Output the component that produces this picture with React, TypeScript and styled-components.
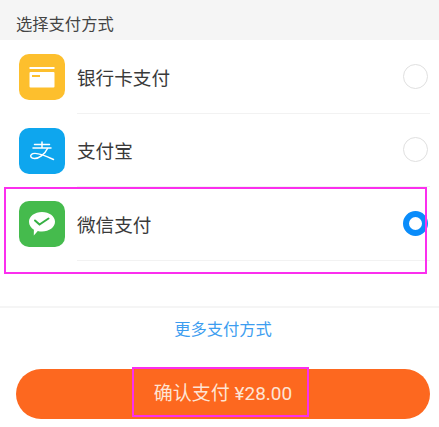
import React, { useState } from 'react';
import styled, { createGlobalStyle } from 'styled-components';

const GlobalStyle = createGlobalStyle`
  html, body {
    margin: 0;
    padding: 0;
    background: #fff;
    font-family: "Roboto", "Noto Sans CJK SC", sans-serif;
  }
`;

type Method = { id: string; label: string; icon: React.ReactNode; color: string };

const CardIcon = () => (
  <svg width="26" height="21" viewBox="0 0 26 21">
    <rect x="0.500" y="0" width="25" height="2" fill="#fff" />
    <rect x="0.500" y="5" width="25" height="15.500" rx="1" fill="#fff" />
    <rect x="3" y="8" width="8" height="2" fill="#fdbf2d" />
  </svg>
);

const AlipayIcon = () => (
  <svg width="26" height="20" viewBox="0 0 26 20" fill="none" stroke="#fff" strokeWidth="1.500" strokeLinecap="round">
    <path d="M13 1v5.500M5.500 3.500h15M4 7h18" />
    <path d="M18.500 7.500C16 13 10 17.500 5.500 17.500 2 17.500 0.800 15 2.400 13.500 5 11 13 13 24.500 18.500" />
  </svg>
);

const WechatIcon = () => (
  <svg width="28" height="26" viewBox="0 0 28 26">
    <path
      d="M14 1C21.200 1 27 5.400 27 10.800S21.200 20.600 14 20.600c-1.500 0-2.900-.2-4.200-.6L5.800 24.500l.1-5.800C3 17 1 14.100 1 10.800 1 5.400 6.800 1 14 1z"
      fill="#fff"
    />
    <path d="M7 9.500l4.500 4L20.500 7.500" fill="none" stroke="#35b043" strokeWidth="2" strokeLinecap="round" />
  </svg>
);

const methods: Method[] = [
  { id: 'card', label: '银行卡支付', icon: <CardIcon />, color: '#fdbf2d' },
  { id: 'alipay', label: '支付宝', icon: <AlipayIcon />, color: '#0ea6ee' },
  { id: 'wechat', label: '微信支付', icon: <WechatIcon />, color: '#45bb4d' },
];

export default function App() {
  const [selected, setSelected] = useState('wechat');

  return (
    <Page>
      <GlobalStyle />
      <Header>选择支付方式</Header>
      <List>
        {methods.map((item) => (
          <Row key={item.id} onClick={() => setSelected(item.id)}>
            <IconBox $color={item.color}>{item.icon}</IconBox>
            <RowBody>
              <Label>{item.label}</Label>
              <Radio $active={selected === item.id} />
            </RowBody>
          </Row>
        ))}
      </List>
      <More>更多支付方式</More>
      <Footer>
        <PayButton>确认支付 ¥28.00</PayButton>
      </Footer>
      <WechatMark />
      <ButtonMark />
    </Page>
  );
}

const Page = styled.main`
  position: relative;
  width: 439px;
  height: 427px;
  overflow: hidden;
  background: #fff;
`;

const Header = styled.h2`
  margin: 0;
  height: 40px;
  padding: 8px 0 0 16px;
  box-sizing: border-box;
  background: #f5f5f5;
  color: #444;
  font-size: 16.300px;
  font-weight: 400;
  line-height: 34px;
`;

const List = styled.section`
  display: flex;
  flex-direction: column;
  height: 268px;
  border-bottom: 2px solid #f5f5f5;
  box-sizing: border-box;
`;

const Row = styled.div`
  display: flex;
  gap: 12px;
  height: 73.500px;
  padding: 0 9px 0 19px;
  cursor: pointer;
`;

const IconBox = styled.div<{ $color: string }>`
  display: flex;
  align-items: center;
  justify-content: center;
  flex: none;
  width: 46px;
  height: 46px;
  margin-top: 14px;
  border-radius: 10px;
  background: ${(p) => p.$color};
`;

const RowBody = styled.div`
  flex: 1;
  display: flex;
  align-items: center;
  justify-content: space-between;
  padding-right: 2px;
  border-bottom: 1px solid #f2f2f2;
`;

const Label = styled.span`
  color: #3a3a3a;
  font-size: 18.600px;
`;

const Radio = styled.span<{ $active: boolean }>`
  width: 25px;
  height: 25px;
  box-sizing: border-box;
  border-radius: 50%;
  border: ${(p) => (p.$active ? '6px solid #0a8cfa' : '1.500px solid #e0e0e0')};
  background: #fff;
`;

const More = styled.div`
  height: 45px;
  padding: 2px 0 0 7px;
  box-sizing: border-box;
  color: #3c9df0;
  font-size: 16.300px;
  line-height: 40px;
  text-align: center;
`;

const Footer = styled.div`
  padding: 16px 9px 0 16px;
`;

const PayButton = styled.button`
  display: block;
  width: 414px;
  height: 50px;
  padding: 0;
  border: 0;
  border-radius: 25px;
  background: #fd681f;
  color: #fde4d4;
  font-family: inherit;
  font-size: 19px;
  line-height: 50px;
`;

const WechatMark = styled.div`
  position: absolute;
  left: 4px;
  top: 187px;
  width: 423px;
  height: 87px;
  box-sizing: border-box;
  border: 2px solid #fb2fee;
  pointer-events: none;
`;

const ButtonMark = styled.div`
  position: absolute;
  left: 132px;
  top: 367px;
  width: 177px;
  height: 50px;
  box-sizing: border-box;
  border: 2px solid #fb2fee;
  pointer-events: none;
`;
